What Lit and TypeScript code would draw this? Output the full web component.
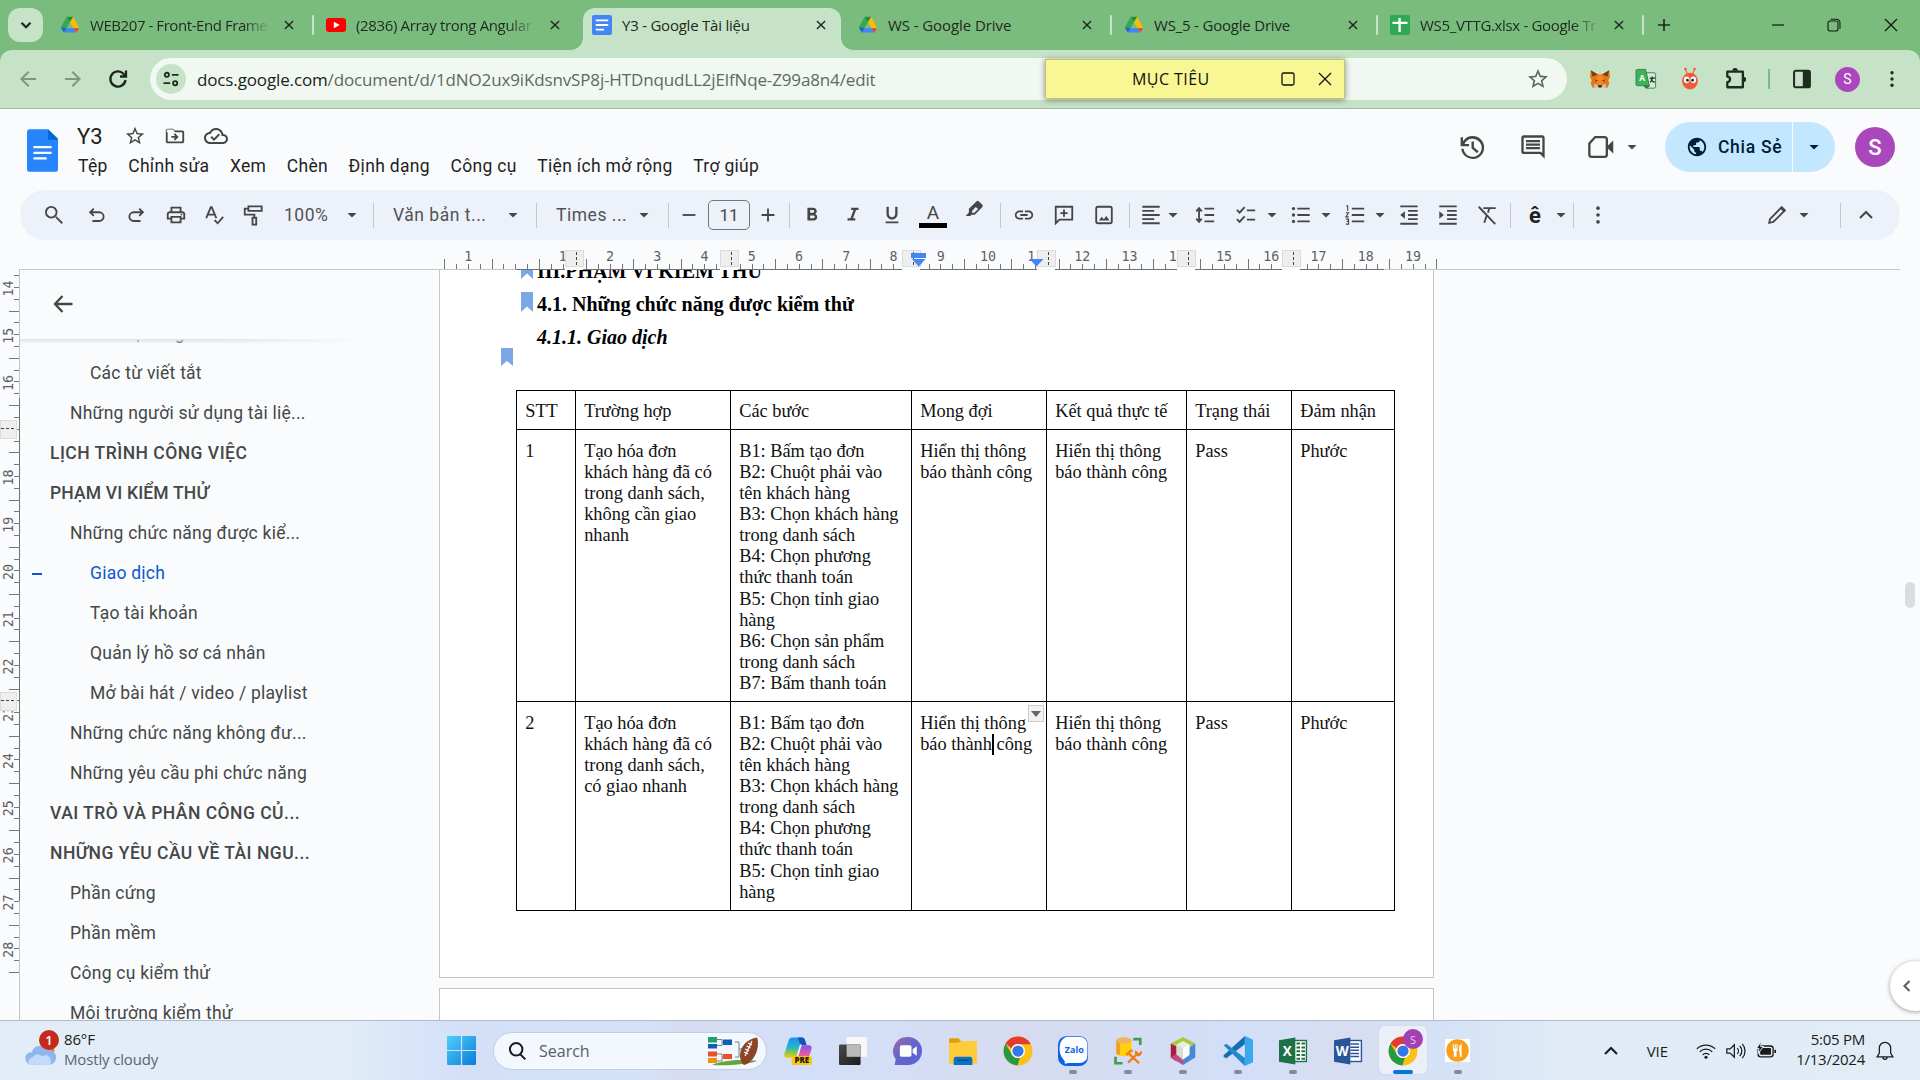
import { LitElement, html, svg, css, nothing, TemplateResult } from "lit";
import { customElement } from "lit/decorators.js";

/* ---------- icon glyphs, each drawn on its own square grid ---------- */
const drive = svg`
  <path fill="#1e8e3e" d="M8.1 2h7.8l-3.9 6.6z"/><path fill="#34a853" d="M8.1 2L1 14.6 4.6 21 12 8.6z"/>
  <path fill="#fbbc04" d="M15.9 2L12 8.6l4.4 7.2H23z"/><path fill="#4285f4" d="M7.7 15.8L4.6 21h14.8l-3-5.2z"/>
  <path fill="#1967d2" d="M1 14.6L4.6 21l3.1-5.2z"/><path fill="#ea4335" d="M16.4 15.8H23L19.4 21z"/>`;
const chromeLogo = svg`
  <circle cx="12" cy="12" r="11.6" fill="#fbc116"/>
  <path fill="#e33b2e" d="M12 .4A11.6 11.6 0 0 1 22.2 6.5H12a5.5 5.5 0 0 0-5 3.2L2 6.2A11.6 11.6 0 0 1 12 .4z"/>
  <path fill="#279847" d="M2 6.2l5.2 8.6A5.5 5.5 0 0 0 13.5 17.4L11.6 23.6A11.6 11.6 0 0 1 2 6.2z"/>
  <circle cx="12" cy="12" r="5.6" fill="#fff"/><circle cx="12" cy="12" r="4.5" fill="#3478e8"/>`;
const down = svg`<path d="M7 9.7l5 5 5-5z"/>`;

const icons: Record<string, TemplateResult> = {
  drive,
  chromeLogo,
  down,
  youtube: svg`<rect y="3.6" width="24" height="16.8" rx="3.6" fill="#f00"/><path fill="#fff" d="M9.4 8l7 4-7 4z"/>`,
  docTab: svg`<rect width="24" height="24" rx="2.5" fill="#4285f4"/><path stroke="#fff" stroke-width="2.2" d="M4.5 6.5h15M4.5 12h15M4.5 17.5h10"/>`,
  sheetTab: svg`<rect width="24" height="24" rx="2.5" fill="#31a853"/><path stroke="#fff" stroke-width="2.8" d="M3 9.5h18M11.5 3.500v17"/>`,
  close: svg`<path class="ln" stroke-width="2.500" d="M5 5l14 14M19 5L5 19"/>`,
  plus: svg`<path class="ln" stroke-width="2.500" d="M12 3v18M3 12h18"/>`,
  thinClose: svg`<path class="ln" stroke-width="1.7" d="M4 4l16 16M20 4L4 20"/>`,
  square: svg`<rect class="ln" stroke-width="1.7" x="4" y="4" width="16" height="16" rx="2"/>`,
  restore: svg`<rect class="ln" stroke-width="1.6" x="3" y="6" width="15" height="15" rx="3"/><path class="ln" stroke-width="1.6" d="M7 3.500h9a5 5 0 0 1 5 5v9"/>`,
  dash: svg`<path class="ln" stroke-width="1.8" d="M3 12h18"/>`,
  chevDown: svg`<path class="ln" stroke-width="3" d="M6 9l6 6 6-6"/>`,
  chevUp: svg`<path class="ln" stroke-width="2.1" d="M6 15l6-6 6 6"/>`,
  chevLeft: svg`<path class="ln" stroke-width="2.6" d="M15 6l-6 6 6 6"/>`,
  back: svg`<path d="M20 11H7.830l5.590-5.590L12 4l-8 8 8 8 1.410-1.410L7.830 13H20z"/>`,
  forward: svg`<path d="M4 11h12.170l-5.590-5.590L12 4l8 8-8 8-1.410-1.410L16.170 13H4z"/>`,
  reload: svg`<path class="ln" stroke-width="2.300" d="M19.500 13a7.600 7.600 0 1 1-2-6.200l2 2M20 3.500v6h-6"/>`,
  tune: svg`<g class="ln" stroke-width="2.2"><circle cx="7" cy="7" r="2.500"/><path d="M13 7h8M3 17h8"/><circle cx="17" cy="17" r="2.500"/></g>`,
  star: svg`<path d="M22 9.240l-7.190-.620L12 2 9.190 8.630 2 9.240l5.460 4.730L5.820 21 12 17.270 18.180 21l-1.630-7.030zM12 15.400l-3.760 2.270 1-4.280-3.320-2.880 4.380-.380L12 6.100l1.710 4.040 4.380.380-3.320 2.880 1 4.280z"/>`,
  folderMove: svg`<path d="M20 6h-8l-2-2H4c-1.100 0-2 .900-2 2v12c0 1.100.900 2 2 2h16c1.100 0 2-.900 2-2V8c0-1.100-.900-2-2-2zm0 12H4V8h16zM3 5h7l2 3H3zM12.160 12H8v2h4.160l-1.590 1.590L11.990 17 16 13.010 11.990 9l-1.410 1.410z"/>`,
  cloud: svg`<path d="M19.350 10.040C18.670 6.590 15.640 4 12 4 9.110 4 6.600 5.640 5.350 8.040 2.340 8.360 0 10.910 0 14c0 3.310 2.690 6 6 6h13c2.760 0 5-2.240 5-5 0-2.640-2.050-4.780-4.650-4.960zM19 18H6c-2.210 0-4-1.790-4-4 0-2.050 1.530-3.760 3.560-3.970l1.070-.110.500-.950C8.080 7.140 9.940 6 12 6c2.620 0 4.880 1.860 5.390 4.430l.300 1.500 1.530.110c1.560.100 2.780 1.410 2.780 2.960 0 1.650-1.350 3-3 3zm-9-3.820l-2.090-2.090L6.500 13.500 10 17l6.010-6.010-1.410-1.410z"/>`,
  search: svg`<path class="ln" stroke-width="2" d="M14 14L21 21"/><circle class="ln" stroke-width="2" cx="9" cy="9" r="5.800"/>`,
  undo: svg`<path class="ln" stroke-width="2" d="M8.500 5L4.500 9l4 4M5 9h9.500a4.750 4.750 0 0 1 0 9.500H7"/>`,
  redo: svg`<path class="ln" stroke-width="2" d="M15.500 5l4 4-4 4M19 9H9.500a4.750 4.750 0 0 0 0 9.500H17"/>`,
  print: svg`<path d="M19 8h-1V3H6v5H5c-1.660 0-3 1.340-3 3v6h4v4h12v-4h4v-6c0-1.660-1.340-3-3-3zM8 5h8v3H8zm8 14H8v-4h8zm2-4v-2H6v2H4v-4c0-.550.450-1 1-1h14c.550 0 1 .450 1 1v4z"/><circle cx="18" cy="11.500" r="1"/>`,
  spell: svg`<path class="ln" stroke-width="2" d="M3.500 15.500L8.500 3.500h1l5 12M5.500 11.500h7M12.500 17.500l3.500 3.500 6-7"/>`,
  paint: svg`<path class="ln" stroke-width="2" d="M7 2.500h14.500v5H7zM7 5H3v6.500h10.500V15"/><rect class="ln" stroke-width="2" x="11.500" y="15" width="4" height="7.500"/>`,
  minus: svg`<path class="ln" stroke-width="2" d="M5 12h14"/>`,
  add: svg`<path class="ln" stroke-width="2" d="M5 12h14M12 5v14"/>`,
  bold: svg`<path d="M15.600 10.790c.970-.670 1.650-1.770 1.650-2.790 0-2.260-1.750-4-4-4H7v14h7.040c2.090 0 3.710-1.700 3.710-3.790 0-1.520-.860-2.820-2.150-3.420zM10 6.500h3c.830 0 1.500.670 1.500 1.500s-.670 1.500-1.500 1.500h-3v-3zm3.500 9H10v-3h3.500c.830 0 1.500.670 1.500 1.500s-.670 1.500-1.500 1.500z"/>`,
  italic: svg`<path d="M10 4v2.500h2.600L9.300 15.500H6V18h8.500v-2.500H12L15.300 6.500H18V4z"/>`,
  under: svg`<path d="M12 17c3.310 0 6-2.690 6-6V3h-2.500v8c0 1.930-1.570 3.500-3.500 3.500S8.500 12.930 8.500 11V3H6v8c0 3.310 2.690 6 6 6zm-7 2v2h14v-2z"/>`,
  marker: svg`<path d="M18.500 1.500a2 2 0 0 0-2.800 0L7.500 9.500v4L4 17.500h5l1.500-1.500h3.500l8-8.200a2 2 0 0 0 0-2.800zM11 12l4-4.500 2.500 2.300L13.400 14H11z"/>`,
  link: svg`<path d="M3.900 12c0-1.710 1.390-3.100 3.100-3.100h4V7H7c-2.760 0-5 2.240-5 5s2.240 5 5 5h4v-1.900H7c-1.710 0-3.100-1.390-3.100-3.100zM8 13h8v-2H8zm9-6h-4v1.900h4c1.710 0 3.100 1.390 3.100 3.100s-1.390 3.100-3.100 3.100h-4V17h4c2.760 0 5-2.240 5-5s-2.240-5-5-5z"/>`,
  comment: svg`<path class="ln" stroke-width="2" d="M3 21V3h18v14H7zM12 6v8M8 10h8"/>`,
  image: svg`<rect class="ln" stroke-width="2" x="3.500" y="3" width="17" height="18" rx="2"/><path d="M6.500 18l3-4 2.300 2.500 2.700-3.500 3.500 5z"/>`,
  align: svg`<path class="ln" stroke-width="2" d="M2.500 3h19M2.500 7.500h13M2.500 12h19M2.500 16.500h13M2.500 21h19"/>`,
  spacing: svg`<path class="ln" stroke-width="2" d="M11.500 5H22M11.500 12H22M11.500 19H22M5.500 5v14M2.500 8l3-3.500 3 3.500M2.500 16l3 3.500 3-3.500"/>`,
  checklist: svg`<path class="ln" stroke-width="2" d="M13 7h9M13 17h9M2 6.500l3 3 5.500-6M2 16.500l3 3 5.500-6"/>`,
  bullets: svg`<path class="ln" stroke-width="2" d="M8 5h13.500M8 12h13.500M8 19h13.500"/><circle cx="3.800" cy="5" r="1.800"/><circle cx="3.800" cy="12" r="1.800"/><circle cx="3.800" cy="19" r="1.800"/>`,
  numbers: svg`<path class="ln" stroke-width="2" d="M8.500 5H22M8.500 12H22M8.500 19H22"/><path class="ln" stroke-width="1.200" d="M2.500 2h1.500v5.500M2 9.500h3L2 14h3.200M2 16.500h3v5.500H2M3 19h2"/>`,
  outdent: svg`<path class="ln" stroke-width="2" d="M2.500 2.500h19M11 7.500h10.500M11 12h10.500M11 16.500h10.500M2.500 21.500h19"/><path d="M7.500 8v8l-5-4z"/>`,
  indent: svg`<path class="ln" stroke-width="2" d="M2.500 2.500h19M11 7.500h10.500M11 12h10.500M11 16.500h10.500M2.500 21.500h19"/><path d="M2.500 8v8l5-4z"/>`,
  clear: svg`<path class="ln" stroke-width="2" d="M3 3l18 19M8 4.500h13.500M14.500 5l-1.500 4.500M11.500 13l-2.500 7.500"/>`,
  dots: svg`<circle cx="12" cy="4.500" r="2"/><circle cx="12" cy="12" r="2"/><circle cx="12" cy="19.500" r="2"/>`,
  pencil: svg`<path class="ln" stroke-width="2" d="M3.500 20.500l.800-4L17 3.500 20.500 7 8 19.600z"/><path d="M15 4.500l4.500 4.500 2-2.500L17.500 2.500z"/>`,
  history: svg`<path d="M13 2.500a9.500 9.500 0 0 0-8 4.300V3.500H3V11h7V9H6.200A7.500 7.500 0 1 1 5.500 13h-2A9.500 9.500 0 1 0 13 2.500zM12 7v5.700l4.600 4 1.300-1.500-3.900-3.400V7z"/>`,
  chatLines: svg`<path d="M21.990 4c0-1.100-.890-2-1.990-2H4c-1.100 0-2 .900-2 2v12c0 1.100.900 2 2 2h14l4 4zM20 4v13.170L18.830 16H4V4zM6 12h12v2H6zm0-3h12v2H6zm0-3h12v2H6z"/>`,
  video: svg`<path class="ln" stroke-width="2" d="M7 3.500H15a2 2 0 0 1 2 2v13a2 2 0 0 1-2 2H4a2 2 0 0 1-2-2V9z"/><path d="M17 11.500l5.500-5v11L17 12.500z"/>`,
  globe: svg`<path d="M12 1C5.900 1 1 5.900 1 12s4.900 11 11 11 11-4.900 11-11S18.100 1 12 1zm-1.100 19.720c-4.350-.540-7.700-4.230-7.700-8.720 0-.680.090-1.330.230-1.970L8.700 15.300v1.100c0 1.210.990 2.200 2.200 2.200zm7.590-2.790c-.290-.890-1.100-1.530-2.090-1.530h-1.100v-3.300c0-.600-.500-1.100-1.100-1.100H7.600V9.800h2.200c.600 0 1.100-.500 1.100-1.100V6.500h2.200c1.210 0 2.200-.990 2.200-2.200v-.450c3.220 1.310 5.500 4.470 5.500 8.150 0 2.290-.880 4.370-2.310 5.930z"/>`,
  docsLogo: svg`<path fill="#2684fc" d="M2.500 0H18l8.500 8v26a2.500 2.500 0 0 1-2.500 2.500H2.500A2.500 2.500 0 0 1 0 34V2.500A2.500 2.500 0 0 1 2.500 0z"/><path fill="#0066da" d="M18 0l8.500 9H18z"/><path stroke="#fff" stroke-width="1.900" d="M5.500 15.400h15.500M5.500 20.200h15.500M5.500 25h11.300"/>`,
  fox: svg`<path fill="#e2761b" d="M1 1.500l8.500 5h5L23 1.500l1 8-2 4 1 4-2 5-6-1.500-2 1.500h-2l-2-1.500L3 22.500l-2-5 1-4-2-4z"/><path fill="#763d16" d="M1 1.500l8.500 5L3 9zM23 1.500l-8.500 5L21 9z"/><path fill="#f6851b" d="M9.500 6.500h5l2.500 8-2.500 4h-5L7 14.500z"/><path fill="#233447" d="M6.500 12.500l3 1.500-2.500 1zM17.500 12.500l-3 1.500 2.500 1zM10 19.500h4l.5 2.500h-5z"/><path fill="#d7c1b3" d="M5 18l4 1 1 3-5 .500zM19 18l-4 1-1 3 5 .500z"/>`,
  translate: svg`<rect x="10.500" y="4.500" width="13" height="18.500" rx="2" fill="#d5eadb" stroke="#237a3c"/><path fill="#237a3c" d="M9 20h8l-4 3.500z"/><path class="ln" stroke="#20508a" stroke-width="1.400" d="M16.500 11H23M19.500 9v2c0 2-1.500 4-2.500 5M18 12c1 2 3 3.500 4.500 4"/><path fill="#3fb257" stroke="#237a3c" d="M2 .500h9.500l4.500 19.500H2a2 2 0 0 1-2-2V2.500a2 2 0 0 1 2-2z"/><text class="tr" x="7.300" y="14">A</text>`,
  bug: svg`<path stroke="#ef5533" stroke-width="1.300" fill="none" d="M9 7L7 1M15 7l2-6"/><circle cx="6.500" cy="0" r="1.500" fill="#ef5533"/><circle cx="17.500" cy="0" r="1.500" fill="#ef5533"/><ellipse cx="12" cy="14.500" rx="9.500" ry="10" fill="#ef5b36"/><ellipse cx="8" cy="13" rx="3.400" ry="4" fill="#fff"/><ellipse cx="16" cy="13" rx="3.400" ry="4" fill="#fff"/><circle cx="8.900" cy="13.500" r="1.700" fill="#293041"/><circle cx="15.100" cy="13.500" r="1.700" fill="#293041"/>`,
  puzzle: svg`<path class="ln" stroke-width="2.500" stroke-linejoin="round" d="M2.500 4h17v17h-17v-5.500a3 3 0 0 0 0-6z"/><path d="M8 3a3 3 0 0 1 6 0zM20 9.500a3 3 0 0 1 0 6z"/>`,
  sidePanel: svg`<rect class="ln" stroke-width="2.400" x="2.500" y="2" width="19" height="20" rx="2"/><path d="M13 2h8.500v20H13z"/>`,
  /* Taskbar artwork */
  start: svg`<defs><linearGradient id="wn" x1="0" y1="0" x2="1" y2="1" gradientUnits="objectBoundingBox"><stop offset="0" stop-color="#4fd0fb"/><stop offset="1" stop-color="#0a7bd8"/></linearGradient></defs><path fill="url(#wn)" d="M1 0h10.500v11.500H0V1a1 1 0 0 1 1-1zM12.500 0H23a1 1 0 0 1 1 1v10.500H12.500zM0 12.500h11.500V24H1a1 1 0 0 1-1-1zM12.500 12.500H24V23a1 1 0 0 1-1 1H12.500z"/>`,
  copilot: svg`<defs><linearGradient id="cp1" x1="0" y1="0" x2="0" y2="1"><stop offset="0" stop-color="#1a8ff0"/><stop offset=".5" stop-color="#29b7c9"/><stop offset=".75" stop-color="#8fca3c"/><stop offset="1" stop-color="#f5c928"/></linearGradient><linearGradient id="cp2" x1="0" y1="0" x2="0" y2="1"><stop offset="0" stop-color="#8a4ff0"/><stop offset="1" stop-color="#f0658c"/></linearGradient></defs><path fill="url(#cp1)" d="M7 .500h9L11 16c-.5 1.500-1 2-3 2H3c-2.500 0-3.200-1.500-2.500-4L4 3c.5-1.500 1.500-2.500 3-2.500z"/><path fill="#1453b8" d="M12 .500h3.500c1.500 0 2.200 1 2.700 2.500L19.500 7H14z"/><path fill="url(#cp2)" d="M14 7h7c2.500 0 3 1.500 2.500 3.500L21.500 17H10.500z"/><path stroke="#eef3fc" stroke-width="1.500" d="M14.500 6.500l-3 10"/><rect x="6.500" y="16.500" width="17.500" height="7.500" rx="2" fill="#fbc70e"/><text class="pre" x="15.300" y="22.700">PRE</text>`,
  taskView: svg`<defs><linearGradient id="tv" x1="0" y1="0" x2="1" y2="1"><stop offset="0" stop-color="#4a4a4a"/><stop offset="1" stop-color="#1b1b1b"/></linearGradient></defs><rect x="6.500" y="0" width="17.500" height="17" rx="1" fill="#f7f7f7"/><rect x="0" y="6.500" width="18.500" height="17.500" rx="1" fill="url(#tv)"/><path fill="#b9babb" d="M6.500 6.500h12V17h-12z"/>`,
  chat: svg`<defs><linearGradient id="ch" x1="0" y1="0" x2="1" y2="1"><stop offset="0" stop-color="#9a6cb5"/><stop offset=".5" stop-color="#6264c7"/><stop offset="1" stop-color="#5b62e0"/></linearGradient></defs><path fill="url(#ch)" d="M12 0a12 12 0 0 1 0 24H.500l1-5A12 12 0 0 1 12 0z"/><rect x="5" y="7" width="10" height="10" rx="1.500" fill="#fff"/><path fill="#fff" d="M16 10.500l3.500-2.500v8L16 13.500z"/>`,
  folder: svg`<path fill="#dfa00b" d="M0 2a1 1 0 0 1 1-1h7l3 3H24v4H0z"/><path fill="#fdcb3c" d="M0 5h8l2-1.500h13a1 1 0 0 1 1 1V23H0z"/><path fill="#0b71c4" d="M4 24v-5a2 2 0 0 1 2-2h12a2 2 0 0 1 2 2v5z"/><path stroke="#0a3f7d" d="M7 20h10"/>`,
  zalo: svg`<rect width="24" height="24" rx="7" fill="#0763e6"/><path fill="#fff" d="M7 .500h10a6.500 6.500 0 0 1 6.500 6.500v9a5.500 5.500 0 0 1-5.500 5.500H10c-2 0-3 .500-5 .500 1-1 .500-1.500-.500-3C2 16 1 13 1.300 9 1.500 5 3 2 7 .500z"/><text class="zalo" x="13" y="13.800">Zalo</text>`,
  database: svg`<path fill="#ffcf10" d="M2 3h13v11c0 1.500-3 2.500-6.500 2.500S2 15.500 2 14z"/><path fill="#eaa01c" d="M2 3h3v12.500C3 15 2 14.500 2 14z"/><ellipse cx="8.500" cy="3" rx="6.500" ry="2.700" fill="#efb35c"/><path fill="none" stroke="#3ea049" stroke-width="2.300" d="M16.500 1.800h6v5M1.300 17v5.500h6"/><path fill="none" stroke="#f07c13" stroke-width="1.900" d="M12 22l9-8.500M13 14.500l8.500 8M10.500 15.500l3.500-3.500 2-.500M19 12c-1 1.500.5 4 2 3.500s2.500-2 2-3"/>`,
  netbeans: svg`<path fill="#a8c93a" d="M12 0l10.500 5.500L12 11 1.500 5.500z"/><path fill="#a81f3c" d="M1.500 5.500L12 11v3L6.500 15v6L1.500 17.500z"/><path fill="#c5487e" d="M1.500 17.500L7 14l5 6v4z"/><path fill="#4788d9" d="M22.500 5.500v12L12 24v-5l5-3V9z"/><path fill="#e6eee2" d="M12 3.500l5.500 3v8.500L12 19l-5.500-4V6.500z"/><path fill="#fff" d="M12 9.500l5.500-3v8.500L12 19z"/><path fill="#d8ddd5" d="M6.500 6.500l5.500 3V19l-5.500-4z"/>`,
  vscode: svg`<path fill="#1070b3" d="M17.500 0L.500 15.300v1.400l2.200 1.100L17.500 6.600z"/><path fill="#2489ca" d="M.500 7.300l2.200-1.100L17.500 17.500V24z"/><path fill="#3aa7ef" d="M17.500 0L24 3v18l-6.500 3z"/>`,
  excel: svg`<rect x="12" y="3" width="11.500" height="18" fill="#fff" stroke="#1e7145" stroke-width="1.200"/><path stroke="#1e7145" stroke-width="1.700" d="M15 5.500h3M19.300 5.500h3M15 9h3M19.300 9h3M15 12.300h3M19.300 12.300h3M15 15.500h3M19.300 15.500h3M15 18.700h3M19.300 18.700h3"/><path fill="#1e7145" d="M0 2.800L14 .500v23L0 21.200z"/><text class="office" x="7" y="16.600">X</text>`,
  word: svg`<rect x="12" y="3" width="11.500" height="18" fill="#fff" stroke="#2a5699" stroke-width="1.200"/><path stroke="#2a5699" stroke-width="1.300" d="M14 6h7.500M14 8.700h7.500M14 11.400h7.500M14 14.100h7.500M14 16.800h7.500"/><path fill="#2a5699" d="M0 2.800L14 .500v23L0 21.200z"/><text class="office" x="7" y="16.400">W</text>`,
  food: svg`<path fill="#fff" d="M0 1h24v22H0z"/><circle cx="12" cy="12" r="10.800" fill="#f8a01c"/><path fill="#fff" d="M7.500 6h1v4h.800V6h1v4h.800V6h1v5c0 1-.500 1.500-1 1.800V18H8.500v-5.200c-.5-.3-1-.8-1-1.800zM16 6v12h-1.800v-4.500h-.700V9c0-1.500 1-3 2.500-3z"/>`,
  football: svg`<path fill="#63a63c" d="M4 29c10-5 32-6 45-4-8 3-28 5-45 4z"/><g stroke="#75838f" fill="none"><path d="M8 3.500h6v6H8M14 6h6M8 18h6v7H8M14 21h6M27 6h4v15h-4M31 13h6"/></g><rect y="1" width="9" height="5.500" fill="#1ba36b"/><rect y="8" width="9" height="4.500" fill="#0e60b5"/><rect x="15" y="3.500" width="9" height="5.500" fill="#0e60b5"/><rect y="15.500" width="9" height="5" fill="#ee4f29"/><rect x="15" y="18" width="9" height="5" fill="#ee4f29"/><rect y="22" width="9" height="5" fill="#eb9413"/><path fill="#8b4425" d="M49 1.500c3 8-1 24-13 27.500C29 24 30 5 49 1.500z"/><path stroke="#fff" stroke-width="1.200" d="M44 5l-7 15M40 7l4 2M38.500 10l4 2M37 13l4 2M36 16l4 2"/>`,
  weather: svg`<circle cx="21" cy="9" r="6.500" fill="#f2860e"/><path fill="#8fb6ee" d="M6 23a6 6 0 0 1 .500-12A7.500 7.500 0 0 1 20.500 9.500 6 6 0 0 1 24 22.800z"/><path fill="#c3dafa" d="M4 23a4.500 4.500 0 0 1 3-7c2-3 7-3.500 9-.500 3-3 8-1 8 3.500a3.500 3.500 0 0 1-1 4z"/>`,
  wifi: svg`<path class="ln" stroke-width="1.500" d="M1 9.500a15.500 15.500 0 0 1 22 0M4.500 13a10.500 10.500 0 0 1 15 0M8 16.500a5.600 5.600 0 0 1 8 0"/><circle cx="12" cy="19.500" r="1.900"/>`,
  sound: svg`<path class="ln" stroke-width="1.500" d="M1 9.500h4l5-5v15l-5-5H1zM13.500 8.500a5 5 0 0 1 0 7M16.500 6a8.500 8.500 0 0 1 0 12M19.500 3.500a12.500 12.500 0 0 1 0 17"/>`,
  battery: svg`<rect class="ln" stroke-width="1.600" x="2.500" y="6" width="18" height="13" rx="3"/><rect x="5" y="8.500" width="13" height="8" rx=".800"/><path d="M22 10.500h2v4h-2z"/><path stroke="#e1ecf7" stroke-width="1.200" d="M6.500 0L.500 9h3l-1 6 6.500-8.500H5.500z"/>`,
  bell: svg`<path class="ln" stroke-width="1.500" d="M12 1.500A6.800 6.800 0 0 0 5.200 8.500v6L2.500 19h19l-2.700-4.500v-6A6.800 6.800 0 0 0 12 1.500zM9.500 19.500a2.500 2.500 0 0 0 5 0"/>`,
  arrowLeft: svg`<path class="ln" stroke-width="2.300" d="M21.500 12H4M11.500 4L4 12l7.500 8"/>`,
};

const icon = (name: string, cls = "i24", box = "0 0 24 24") =>
  html`<svg class="icon ${cls}" viewBox=${box}>${icons[name]}</svg>`;

/* ---------- page data ---------- */
interface Tab { icon: string; title: string; active?: boolean; cut?: boolean; bar?: boolean; cls: string }
const tabs: Tab[] = [
  { icon: "drive", title: "WEB207 - Front-End Frame", cut: true, bar: true, cls: "t1" },
  { icon: "youtube", title: "(2836) Array trong Angular", cut: true, cls: "t2" },
  { icon: "docTab", title: "Y3 - Google Tài liệu", active: true, cls: "t3" },
  { icon: "drive", title: "WS - Google Drive", bar: true, cls: "t4" },
  { icon: "drive", title: "WS_5 - Google Drive", bar: true, cls: "t5" },
  { icon: "sheetTab", title: "WS5_VTTG.xlsx - Google Tr", cut: true, bar: true, cls: "t6" },
];

const menus = ["Tệp", "Chỉnh sửa", "Xem", "Chèn", "Định dạng", "Công cụ", "Tiện ích mở rộng", "Trợ giúp"];

/* Toolbar items: what is shown, the space before its cell, the cell's width. */
const tools: [string, number, number][] = [
  ["search", 10, 22], ["undo", 21, 22], ["redo", 17, 22], ["print", 18, 22], ["spell", 16, 22], ["paint", 17, 22],
  ["@100%", 20, 52], ["down", 5, 22], ["|", 10, 1], ["@Văn bản t...", 19, 98], ["down", 11, 22], ["|", 12, 1],
  ["@Times ...", 19, 72], ["down", 5, 22], ["|", 13, 1], ["minus", 9, 22], ["#", 8, 42], ["add", 7, 22], ["|", 10, 1],
  ["bold", 11, 22], ["italic", 19, 22], ["under", 17, 22], ["color", 16, 28], ["marker", 15, 22], ["|", 16, 1],
  ["link", 12, 22], ["comment", 18, 22], ["image", 18, 22], ["|", 14, 1], ["align", 10, 22], ["down", 0, 22], ["spacing", 10, 22],
  ["checklist", 19, 22], ["down", 4, 22], ["bullets", 7, 22], ["down", 3, 22], ["numbers", 7, 22], ["down", 3, 22], ["outdent", 7, 22], ["indent", 17, 22],
  ["clear", 17, 22], ["|", 12, 1], ["ê", 13, 22], ["down", 4, 22], ["|", 1, 1], ["dots", 13, 22],
];

const outline: [number, string, string?][] = [
  [3, "Các định nghĩa"], [3, "Các từ viết tắt"], [2, "Những người sử dụng tài liệ..."], [1, "LỊCH TRÌNH CÔNG VIỆC"],
  [1, "PHẠM VI KIỂM THỬ", "tight"], [2, "Những chức năng được kiể..."], [3, "Giao dịch", "on"], [3, "Tạo tài khoản"],
  [3, "Quản lý hồ sơ cá nhân"], [3, "Mở bài hát / video / playlist"], [2, "Những chức năng không đư..."],
  [2, "Những yêu cầu phi chức năng"], [1, "VAI TRÒ VÀ PHÂN CÔNG CỦ..."], [1, "NHỮNG YÊU CẦU VỀ TÀI NGU..."],
  [2, "Phần cứng"], [2, "Phần mềm"], [2, "Công cụ kiểm thử"], [2, "Môi trường kiểm thử"],
];

const result = "Hiển thị thông\nbáo thành công";
const cells: string[][] = [
  ["STT", "Trường hợp", "Các bước", "Mong đợi", "Kết quả thực tế", "Trạng thái", "Đảm nhận"],
  ["1", "Tạo hóa đơn\nkhách hàng đã có\ntrong danh sách,\nkhông cần giao\nnhanh",
    "B1: Bấm tạo đơn\nB2: Chuột phải vào\ntên khách hàng\nB3: Chọn khách hàng\ntrong danh sách\nB4: Chọn phương\nthức thanh toán\nB5: Chọn tỉnh giao\nhàng\nB6: Chọn sản phẩm\ntrong danh sách\nB7: Bấm thanh toán",
    result, result, "Pass", "Phước"],
  ["2", "Tạo hóa đơn\nkhách hàng đã có\ntrong danh sách,\ncó giao nhanh",
    "B1: Bấm tạo đơn\nB2: Chuột phải vào\ntên khách hàng\nB3: Chọn khách hàng\ntrong danh sách\nB4: Chọn phương\nthức thanh toán\nB5: Chọn tỉnh giao\nhàng",
    result, result, "Pass", "Phước"],
];

const apps: { icon: string; run?: boolean; active?: boolean; cls?: string }[] = [
  { icon: "copilot" }, { icon: "taskView" }, { icon: "chat" }, { icon: "folder" }, { icon: "chromeLogo", cls: "i30" },
  { icon: "zalo", run: true, cls: "i30" }, { icon: "database", run: true }, { icon: "netbeans", run: true },
  { icon: "vscode", run: true, cls: "i30" }, { icon: "excel", run: true }, { icon: "word" },
  { icon: "chromeLogo", active: true, cls: "i30" }, { icon: "food", run: true, cls: "i25" },
];

const CM = 47.24;
const segoe = css`"Open Sans", "Noto Sans", sans-serif`;

const iconCss = css`
  .icon { display: block; flex: none; fill: currentColor; overflow: visible; }
  .ln { fill: none; stroke: currentColor; }
  .i12 { width: 12px; height: 12px; } .i14 { width: 14px; height: 14px; }
  .i16 { width: 16px; height: 16px; } .i18 { width: 18px; height: 18px; }
  .i20 { width: 20px; height: 20px; } .i22 { width: 22px; height: 22px; }
  .i24 { width: 24px; height: 24px; } .i25 { width: 25px; height: 25px; }
  .i28 { width: 28px; height: 28px; } .i29 { width: 29px; height: 29px; } .i30 { width: 30px; height: 30px; }
`;

@customElement("browser-chrome")
class BrowserChrome extends LitElement {
  static styles = [iconCss, css`
    :host { display: block; position: relative; font-family: ${segoe}; color: #1f2a20; background: #7abc7d; }
    .strip { display: flex; height: 50px; align-items: center; }
    .list { width: 35px; height: 34px; margin: 0 0 0 8px; border-radius: 12px; background: #c6e2c7; display: grid; place-items: center; }
    .tab { display: flex; align-items: center; width: 266px; height: 50px; box-sizing: border-box; position: relative; }
    .fav { margin-left: 11px; }
    .title { font-size: 15px; white-space: nowrap; overflow: hidden; margin-left: 10px; width: 182px; line-height: 24px; }
    .t1 { letter-spacing: -0.43px; } .t2 { letter-spacing: -0.35px; } .t3 { letter-spacing: -0.23px; }
    .t4 { letter-spacing: -0.08px; } .t5 { letter-spacing: -0.2px; } .t6 { letter-spacing: -0.33px; }
    .cut { -webkit-mask-image: linear-gradient(90deg, #000 84%, transparent 99%); mask-image: linear-gradient(90deg, #000 84%, transparent 99%); }
    .x { margin-left: 10px; }
    .tabs { display: flex; margin-left: 6px; }
    .bar::after { content: ""; position: absolute; right: 1px; top: 15px; width: 2px; height: 20px; background: #c6e2c7; border-radius: 1px; }
    .active::before { content: ""; position: absolute; left: 2px; right: 6px; top: 8px; bottom: 0; background: #c6e2c7; border-radius: 12px 12px 0 0; }
    .active::after { content: ""; position: absolute; left: -10px; right: -6px; bottom: 0; height: 12px;
      background: radial-gradient(circle at 0 0, transparent 11.5px, #c6e2c7 12px) left / 12px 12px no-repeat,
                  radial-gradient(circle at 100% 0, transparent 11.5px, #c6e2c7 12px) right / 12px 12px no-repeat; }
    .active > * { position: relative; }
    .new { margin-left: 11px; }
    .controls { margin-left: auto; display: flex; gap: 40px; margin-right: 20px; align-items: center; color: #101810; }
    .bar2 { display: flex; align-items: center; height: 58px; background: #c6e2c7; border-radius: 12px 12px 0 0; border-bottom: 1px solid #a3b8a2; }
    .nav { display: flex; gap: 21px; margin-left: 16px; width: 134px; color: #7f967f; }
    .nav .last { color: #1d261d; }
    .omni { display: flex; align-items: center; width: 1417px; height: 42px; border-radius: 21px; background: #f1f8f1; box-sizing: border-box; padding: 0 17px 0 6px; }
    .tune { width: 30px; height: 30px; border-radius: 50%; background: #c6e2c7; display: grid; place-items: center; }
    .url { font-size: 17px; margin-left: 11px; letter-spacing: -0.14px; color: #5e6a60; flex: 1; white-space: nowrap; }
    .host { color: #1b231c; }
    .star { color: #5d645e; }
    .ext { display: flex; align-items: center; padding-left: 23px; }
    .e2 { margin-left: 26px; } .e3 { margin-left: 24px; } .e4 { margin-left: 25px; } .e5 { margin-left: 22px; }
    .tr { font: 700 10px "Open Sans", sans-serif; fill: #fff; text-anchor: middle; }
    .sep { width: 2px; height: 20px; background: #7abc7d; margin-left: 21px; }
    .me { width: 25px; height: 25px; border-radius: 50%; background: #ab47bc; color: #fff; font: 14px Roboto, sans-serif; display: grid; place-items: center; margin-left: 23px; }
    .note { position: absolute; left: 1045px; top: 59px; width: 298px; height: 38px; background: #f9f794; border: 1px solid #c5c36c; box-shadow: 0 1px 6px rgba(0,0,0,.45);
      display: flex; align-items: center; color: #111; }
    .noteText { font-size: 16px; letter-spacing: 0.45px; margin-left: 86px; width: 147px; }
    .note .x2 { margin-left: 19px; }
  `];
  render() {
    return html`
      <div class="strip">
        <div class="list">${icon("chevDown", "i18")}</div>
        <div class="tabs">
          ${tabs.map((t) => html`<div class="tab ${t.active ? "active" : ""} ${t.bar ? "bar" : ""}">
            ${icon(t.icon, "i20 fav")}
            <span class="title ${t.cls} ${t.cut ? "cut" : ""}">${t.title}</span>
            ${icon("close", "i14 x")}
          </div>`)}
        </div>
        ${icon("plus", "i16 new")}
        <div class="controls">${icon("dash", "i16")}${icon("restore", "i16")}${icon("thinClose", "i18")}</div>
      </div>
      <div class="bar2">
        <div class="nav">${icon("back", "i24")}${icon("forward", "i24")}${icon("reload", "i24 last")}</div>
        <div class="omni">
          <div class="tune">${icon("tune", "i20")}</div>
          <div class="url"><span class="host">docs.google.com</span>/document/d/1dNO2ux9iKdsnvSP8j-HTDnqudLL2jElfNqe-Z99a8n4/edit</div>
          ${icon("star", "i24 star")}
        </div>
        <div class="ext">
          ${icon("fox", "i20")}${icon("translate", "i20 e2")}${icon("bug", "i20 e3")}${icon("puzzle", "i22 e4")}
          <span class="sep"></span>${icon("sidePanel", "i20 e5")}<span class="me">S</span>${icon("dots", "i20 e5")}
        </div>
      </div>
      <div class="note"><span class="noteText">MỤC TIÊU</span>${icon("square", "i18")}${icon("thinClose", "i18 x2")}</div>`;
  }
}

@customElement("docs-header")
class DocsHeader extends LitElement {
  static styles = [iconCss, css`
    :host { display: block; font-family: Roboto, sans-serif; color: #1f1f1f; background: #f9fbfd; }
    .head { display: flex; height: 81px; align-items: flex-start; }
    .logo { width: 31px; height: 43px; margin: 20px 0 0 27px; }
    .names { margin-left: 19px; }
    .first { display: flex; align-items: center; height: 28px; margin-top: 13px; color: #444746; }
    .name { font-size: 22px; color: #1f1f1f; width: 47px; }
    .first .icon { margin-right: 18px; }
    .menus { display: flex; gap: 20.500px; font-size: 17.5px; line-height: 24px; margin: 4px 0 0 1px; letter-spacing: 0.32px; }
    .right { margin-left: auto; display: flex; align-items: center; height: 50px; margin-top: 13px; color: #444746; }
    .g1 { margin-right: 33px; } .g2 { margin-right: 40px; }
    .g3 { margin: 0 22px 0 6px; }
    .share { display: flex; align-items: center; width: 170px; height: 50px; border-radius: 25px; background: #c2e7ff; color: #001d35; }
    .share .a { display: flex; align-items: center; width: 128px; height: 50px; border-right: 1px solid #f9fbfd; box-sizing: border-box; padding-left: 22px; gap: 11px; font-size: 17.500px; font-weight: 500; letter-spacing: .7px; }
    .share .b { margin: 0 auto; }
    .avatar { width: 40px; height: 40px; border-radius: 50%; background: #ab47bc; color: #fff; font-size: 22px; font-weight: 500; display: grid; place-items: center; margin: 0 25px 0 20px; }
    .tools { display: flex; align-items: center; height: 50px; margin: 0 20px; border-radius: 25px; background: #edf2fa; color: #444746; padding-left: 13px; box-sizing: border-box; }
    .slot { display: flex; justify-content: center; align-items: center; flex: none; height: 50px; }
    .sep { width: 1px; height: 25px; background: #c7c7c7; }
    .txt { font-size: 17.500px; white-space: nowrap; justify-content: flex-start; letter-spacing: .52px; color: #505355; }
    .size { width: 40px; height: 28px; border: 1px solid #747775; border-radius: 5px; font-size: 17px; display: grid; place-items: center; }
    .color { display: flex; flex-direction: column; align-items: center; font-size: 19px; line-height: 19px; margin-top: 1px; }
    .color::after { content: ""; width: 28px; height: 5px; background: #000; margin-top: 1px; }
    .lift { margin-top: -8px; }
    .e { font-size: 22px; font-weight: 700; color: #1f1f1f; }
    .end { margin-left: auto; display: flex; align-items: center; margin-right: 22px; }
    .end .sep { margin: 0 13px 0 25px; }
    .end .dn { margin: 0 0 0 5px; }
  `];
  tool([name, gap, w]: [string, number, number]) {
    const text = name[0] === "@";
    const body =
      text ? name.slice(1)
      : name === "|" ? html`<span class="sep"></span>`
      : name === "#" ? html`<span class="size">11</span>`
      : name === "ê" ? html`<span class="e">ê</span>`
      : name === "color" ? html`<span class="color">A</span>`
      : icon(name, name === "marker" ? "i22 lift" : "i22");
    return html`<span class="slot ${text ? "txt" : ""}" style="width:${w}px;margin-left:${gap}px">${body}</span>`;
  }
  render() {
    return html`
      <div class="head">
        ${icon("docsLogo", "logo", "0 0 26.5 36.5")}
        <div class="names">
          <div class="first"><span class="name">Y3</span>${icon("star", "i22")}${icon("folderMove", "i22")}${icon("cloud", "i24")}</div>
          <div class="menus">${menus.map((m) => html`<span>${m}</span>`)}</div>
        </div>
        <div class="right">
          ${icon("history", "i29 g1")}${icon("chatLines", "i28 g2")}${icon("video", "i28")}${icon("down", "i22 g3")}
          <div class="share"><span class="a">${icon("globe", "i20")}Chia Sẻ</span>${icon("down", "i22 b")}</div>
          <div class="avatar">S</div>
        </div>
      </div>
      <div class="tools">
        ${tools.map((t) => this.tool(t))}
        <div class="end">${icon("pencil", "i22")}${icon("down", "i22 dn")}<span class="sep"></span>${icon("chevUp", "i24")}</div>
      </div>`;
  }
}

@customElement("top-ruler")
class TopRuler extends LitElement {
  static styles = css`
    :host { display: block; height: 30px; background: #f9fbfd; }
    svg { display: block; }
    .tick { stroke: #747775; }
    text { font: 13.300px "DejaVu Sans Mono", monospace; fill: #5f6162; text-anchor: middle; }
    .light { fill: #c4c7c5; } .dark { fill: #6f7270; } .blue { fill: #4285f4; }
    .stop { fill: #eee; stroke: #dcdcdc; } .dots { stroke: #444; stroke-dasharray: 3 2; }
  `;
  render() {
    const zero = 515.3;
    const ticks = Array.from({ length: 85 }, (_, i) => i - 6);
    const stops = [[565, 576], [720, 731], [902, 913], [1037, 1048], [1177, 1188], [1282, 1293]];
    return html`<svg width="1920" height="30">
      <rect class="light" x="19" y="29" width="1881" height="1"/>
      <rect class="dark" x="516" y="29" width="868" height="1"/>
      ${ticks.map((k) => { const x = Math.round(zero + (k * CM) / 4) + 0.5; const long = ((k % 4) + 4) % 4 === 2;
        return svg`<line class="tick" x1=${x} x2=${x} y1=${long ? 19 : 24} y2="29"/>`; })}
      ${[-1, ...Array.from({ length: 19 }, (_, i) => i + 1)].map((n) => svg`<text x=${zero + n * CM + 0.2} y="21">${Math.abs(n)}</text>`)}
      ${stops.map(([x, d]) => svg`<rect class="stop" x=${x + 0.5} y="10.5" width="18" height="16"/><rect x=${x} y="27" width="18" height="3" fill="#f9fbfd"/><line class="dots" x1=${d + 0.5} x2=${d + 0.5} y1="12" y2="27"/>`)}
      <path class="blue" d="M911 13h15v5h-15zM912 19h13.500l-6.700 7.500zM1029.500 19h14l-7 7.500z"/>
    </svg>`;
  }
}

@customElement("side-ruler")
class SideRuler extends LitElement {
  static styles = css`
    :host { display: block; width: 20px; flex: none; }
    svg { display: block; }
    .tick { stroke: #747775; }
    text { font: 13.300px "DejaVu Sans Mono", monospace; fill: #5f6162; text-anchor: middle; }
    .light { fill: #c4c7c5; } .dark { fill: #6f7270; }
    .stop { fill: #eee; stroke: #dcdcdc; } .dots { stroke: #444; stroke-dasharray: 3 2; }
  `;
  render() {
    const at = (n: number) => 18 + (n - 14) * CM;
    const ticks = Array.from({ length: 60 }, (_, i) => 13.75 + i / 4);
    return html`<svg width="20" height="750">
      <rect class="light" x="19" y="0" width="1" height="750"/><rect class="dark" x="19" y="128" width="1" height="503"/>
      ${ticks.map((n) => { const y = Math.round(at(n)) - 0.5; return svg`<line class="tick" y1=${y} y2=${y} x1=${n % 1 === 0.5 ? 9 : 14} x2="19"/>`; })}
      ${Array.from({ length: 15 }, (_, i) => 14 + i).map((n) => svg`<text transform="translate(12.5 ${at(n) + 0.5}) rotate(-90)">${n}</text>`)}
      ${[150, 422].map((y) => svg`<rect class="stop" x="0.5" y=${y + 0.5} width="16" height="18"/><line class="dots" x1="1" x2="16" y1=${y + 8.5} y2=${y + 8.5}/>`)}
    </svg>`;
  }
}

@customElement("doc-outline")
class DocOutline extends LitElement {
  static styles = [iconCss, css`
    :host { display: flex; flex-direction: column; width: 419px; height: 750px; overflow: hidden; font-family: Roboto, sans-serif; color: #444746; }
    .top { height: 69px; flex: none; display: flex; align-items: center; padding-left: 31px; position: relative; z-index: 1; background: #f9fbfd; }
    .top .icon { margin-top: -2px; }
    .top::after { content: ""; position: absolute; left: 0; top: 69px; width: 345px; height: 5px;
      background: linear-gradient(#dfe1e3, rgba(249,251,253,0)); -webkit-mask-image: linear-gradient(90deg, #000 60%, transparent); mask-image: linear-gradient(90deg, #000 60%, transparent); }
    .rows { margin-top: -26px; }
    .row { height: 40px; line-height: 40px; font-size: 17.500px; white-space: nowrap; position: relative; letter-spacing: .23px; }
    .l1 { padding-left: 30px; font-weight: 500; letter-spacing: .48px; }
    .tight { letter-spacing: .17px; }
    .l2 { padding-left: 50px; } .l3 { padding-left: 70px; }
    .on { color: #0b57d0; }
    .on::before { content: ""; position: absolute; left: 12px; top: 20px; width: 10px; height: 2px; background: #0b57d0; }
  `];
  render() {
    return html`<div class="top">${icon("arrowLeft", "i24")}</div>
      <div class="rows">${outline.map(([l, t, cls]) => html`<div class="row l${l} ${cls ?? ""}">${t}</div>`)}</div>`;
  }
}

@customElement("doc-pages")
class DocPages extends LitElement {
  static styles = css`
    :host { display: block; width: 995px; height: 750px; overflow: hidden; font-family: "Liberation Serif", "Times New Roman", serif; color: #000; }
    .page { display: flow-root; box-sizing: border-box; background: #fff; border: 1px solid #c4c7c5; border-top: 0; height: 708px; position: relative; }
    .next { margin-top: 10px; border-top: 1px solid #c4c7c5; height: 100px; }
    .h { margin: 0; padding-left: 97px; font-size: 20px; font-weight: 700; line-height: 33px; height: 33px; white-space: nowrap; }
    .h1 { margin-top: -15px; }
    .it { font-style: italic; }
    .grid { display: grid; grid-template-columns: 59px 155px 181px 135px 140px 105px 104px; grid-template-rows: 39px 272px 210px; margin: 36px 0 0 76px; width: 879px; }
    .cell { border: 1px solid #000; border-width: 1px 0 0 1px; padding: 11px 0 0 8.200px; box-sizing: border-box; font-size: 18.330px; line-height: 21.080px; white-space: pre; position: relative; color: #111; }
    .cell.head { padding-top: 10px; }
    .cell.end { border-right-width: 1px; }
    .cell.foot { border-bottom-width: 1px; }
    .caret { position: absolute; left: 80px; top: 32px; width: 2px; height: 21px; background: #000; }
    .drop { position: absolute; left: 116px; top: 3px; width: 14px; height: 15px; border: 1px solid #ccc; background: #f1f1f1; display: grid; place-items: center; }
    .drop::after { content: ""; border: 5px solid transparent; border-top: 6px solid #666; border-bottom: 0; }
    .mark { position: absolute; width: 12px; height: 20px; background: #7ba7e7; clip-path: polygon(0 0, 100% 0, 100% 100%, 50% 72%, 0 100%); }
    .m1 { left: 81px; top: -11px; } .m2 { left: 81px; top: 22px; } .m3 { left: 61px; top: 78px; height: 18px; }
  `;
  render() {
    return html`<div class="page">
        <div class="mark m1"></div><div class="mark m2"></div><div class="mark m3"></div>
        <p class="h h1">III.PHẠM VI KIỂM THỬ</p>
        <p class="h">4.1. Những chức năng được kiểm thử</p>
        <p class="h it">4.1.1. Giao dịch</p>
        <div class="grid">${cells.map((r, i) => r.map((c, j) => html`<div class="cell ${i === 0 ? "head" : ""} ${j === 6 ? "end" : ""} ${i === 2 ? "foot" : ""}">${c}${i === 2 && j === 3 ? html`<span class="caret"></span><span class="drop"></span>` : nothing}</div>`))}</div>
      </div>
      <div class="page next"></div>`;
  }
}

@customElement("task-bar")
class TaskBar extends LitElement {
  static styles = [iconCss, css`
    :host { display: flex; height: 60px; box-sizing: border-box; border-top: 1px solid #b1bac6; align-items: center; font-family: ${segoe}; color: #1b1b1b; font-size: 15px;
      background: linear-gradient(90deg, #e2edf7 0, #e1ecf8 350px, #d3e0f8 460px, #d4e3f8 640px, #d7dcf1 680px, #d3e0f9 800px, #d6dbf0 1020px, #d2dff8 1250px, #d8ddf1 1340px, #d5e2f6 1440px, #e0ebf7 1560px, #e1ecf7 100%); }
    .weather { display: flex; align-items: center; width: 447px; box-sizing: border-box; padding-left: 25px; position: relative; }
    .wicon { width: 30px; height: 26px; margin-top: 4px; }
    .badge { position: absolute; left: 39px; top: -3px; width: 20px; height: 20px; border-radius: 50%; background: #c42b1c; color: #fff; font-size: 13px; font-weight: 600; display: grid; place-items: center; }
    .lines { margin-left: 9px; line-height: 20px; letter-spacing: -.15px; margin-top: -4px; }
    .dim { color: #5c6370; }
    .search { margin-left: 17px; width: 274px; height: 38px; box-sizing: border-box; border: 1px solid #c1cde2; border-radius: 19px; background: #f3f7fe; display: flex; align-items: center; padding-left: 13px; }
    .search .q { margin-left: 12px; font-size: 16px; color: #5a5d66; flex: 1; }
    .ball { width: 52px; height: 30px; margin-right: 6px; }
    .apps { display: flex; margin-left: 3px; }
    .app { width: 55px; height: 59px; display: grid; place-items: center; position: relative; }
    .app .icon { position: relative; }
    .run::after { content: ""; position: absolute; left: 24px; top: 49px; width: 8px; height: 4px; border-radius: 2px; background: #858994; }
    .on::before { content: ""; position: absolute; left: 4px; top: 5px; width: 48px; height: 48px; border-radius: 5px; background: #eceff8; box-shadow: 0 0 1px #aab; }
    .on::after { content: ""; position: absolute; left: 18px; top: 49px; width: 20px; height: 4px; border-radius: 2px; background: #0078d4; }
    .who { position: absolute; left: 28px; top: 8px; width: 20px; height: 20px; border-radius: 50%; background: #a240b4; color: #e8cbee; display: grid; place-items: center; font-size: 11px; }
    .pre { font: 800 6.800px "Open Sans", sans-serif; text-anchor: middle; fill: #1a1a1a; }
    .zalo { font: 700 7.200px "Open Sans", sans-serif; text-anchor: middle; fill: #0763e6; }
    .office { font: 700 11.500px "Open Sans", sans-serif; text-anchor: middle; fill: #fff; }
    .tray { margin-left: auto; display: flex; align-items: center; padding-right: 25px; }
    .vie { margin: 0 28px 0 24px; letter-spacing: -.05px; }
    .tray .gap { margin-left: 10px; }
    .clock { text-align: right; line-height: 20px; width: 89px; letter-spacing: -.25px; margin-top: -4px; }
    .bell { margin-left: 10px; }
  `];
  render() {
    return html`
      <div class="weather">${icon("weather", "wicon", "0 0 28 24")}<span class="badge">1</span>
        <div class="lines"><div>86°F</div><div class="dim">Mostly cloudy</div></div></div>
      ${icon("start", "i29")}
      <div class="search"><svg class="icon i20" viewBox="0 0 24 24"><circle class="ln" cx="11" cy="10" r="7.500" stroke-width="2.400"/><path class="ln" stroke-width="2.400" d="M16 16l6 6"/></svg>
        <span class="q">Search</span>${icon("football", "ball", "0 0 52 30")}</div>
      <div class="apps">${apps.map((a) => html`<div class="app ${a.run ? "run" : ""} ${a.active ? "on" : ""}">${icon(a.icon, a.cls ?? "i28")}${a.active ? html`<span class="who">S</span>` : nothing}</div>`)}</div>
      <div class="tray">${icon("chevUp", "i24")}<span class="vie">VIE</span>${icon("wifi", "i20")}${icon("sound", "i20 gap")}${icon("battery", "i20 gap")}
        <div class="clock"><div>5:05 PM</div><div>1/13/2024</div></div>${icon("bell", "i20 bell")}</div>`;
  }
}

@customElement("app-root")
class AppRoot extends LitElement {
  static styles = [iconCss, css`
    :host { display: block; width: 1920px; height: 1080px; overflow: hidden; position: relative; background: #f9fbfd; }
    .body { display: flex; height: 750px; }
    .thumb { position: absolute; left: 1905px; top: 582px; width: 10px; height: 26px; border-radius: 5px; background: #dadce0; }
    .side { position: absolute; left: 1890px; top: 961px; width: 50px; height: 50px; border-radius: 50%; background: #fff; box-shadow: 0 1px 4px rgba(60,64,67,.5); color: #5f6368; display: flex; align-items: center; padding-left: 7px; box-sizing: border-box; }
  `];
  render() {
    return html`<browser-chrome></browser-chrome><docs-header></docs-header><top-ruler></top-ruler>
      <div class="body"><side-ruler></side-ruler><doc-outline></doc-outline><doc-pages></doc-pages></div>
      <task-bar></task-bar>
      <div class="thumb"></div><div class="side">${icon("chevLeft", "i20")}</div>`;
  }
}
